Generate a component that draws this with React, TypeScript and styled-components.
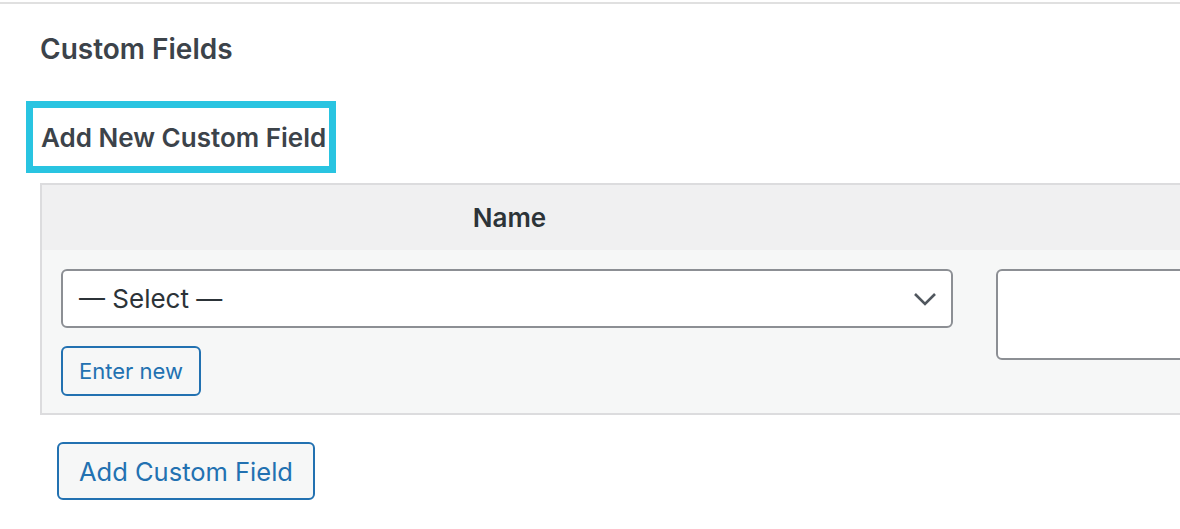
import React from 'react';
import styled, { createGlobalStyle } from 'styled-components';

const GlobalStyle = createGlobalStyle`
  html, body {
    margin: 0;
    padding: 0;
    background: #fff;
    overflow: hidden;
  }
  body {
    font-family: Inter, "Noto Sans", "Liberation Sans", sans-serif;
    color: #3c434a;
  }
`;

const Panel = styled.div`
  margin-top: 2px;
  border-top: 2px solid #e0e0e0;
  width: 100%;
`;

const Title = styled.h2`
  margin: 0;
  padding: 27px 0 0 40px;
  font-size: 28px;
  font-weight: 600;
  line-height: 36px;
  color: #3c434a;
`;

const Highlight = styled.div`
  margin: 34px 0 0 26px;
  width: 288px;
  height: 58px;
  border: 7px solid #29c4e1;
  display: flex;
  align-items: center;
  padding-left: 8px;
  box-sizing: content-box;
  font-size: 26px;
  font-weight: 600;
  color: #3c434a;
  white-space: nowrap;
`;

const Table = styled.div`
  margin: 10px 0 0 40px;
  width: 1800px;
  border: 2px solid #dcdcde;
  display: grid;
  grid-template-columns: 935px 1fr;
`;

const HeadCell = styled.div`
  background: #f0f0f1;
  height: 65px;
  display: flex;
  align-items: center;
  justify-content: center;
  font-size: 26px;
  font-weight: 600;
  color: #2c3338;
`;

const BodyCell = styled.div`
  background: #f6f7f7;
  padding: 19px 19px 17px;
  display: flex;
  flex-direction: column;
  align-items: flex-start;
  gap: 18px;
`;

const SelectBox = styled.div`
  box-sizing: border-box;
  width: 892px;
  height: 59px;
  border: 2px solid #8c8f94;
  border-radius: 6px;
  background: #fff;
  display: flex;
  align-items: center;
  justify-content: space-between;
  padding: 0 14px 0 16px;
  font-size: 26px;
  color: #2c3338;
`;

const TextArea = styled.div`
  box-sizing: border-box;
  width: 700px;
  height: 91px;
  border: 2px solid #8c8f94;
  border-radius: 6px;
  background: #fff;
`;

const Button = styled.button<{ $big?: boolean }>`
  box-sizing: border-box;
  height: ${p => (p.$big ? 58 : 50)}px;
  padding: 0 ${p => (p.$big ? 20 : 16)}px;
  border: 2px solid #2271b1;
  border-radius: 6px;
  background: #f6f7f7;
  color: #2271b1;
  font-family: inherit;
  font-size: ${p => (p.$big ? 25.5 : 22)}px;
  white-space: nowrap;
  cursor: pointer;
`;

const Footer = styled.div`
  padding: 27px 0 0 57px;
`;

const Chevron = () => (
  <svg width="24" height="14" viewBox="0 0 24 14" fill="none">
    <path d="M2 2l10 10L22 2" stroke="#50575e" strokeWidth="2.6" />
  </svg>
);

export default function App() {
  return (
    <>
      <GlobalStyle />
      <Panel>
        <Title>Custom Fields</Title>
        <Highlight>Add New Custom Field</Highlight>
        <Table>
          <HeadCell>Name</HeadCell>
          <HeadCell />
          <BodyCell>
            <SelectBox>
              <span>— Select —</span>
              <Chevron />
            </SelectBox>
            <Button>Enter new</Button>
          </BodyCell>
          <BodyCell>
            <TextArea />
          </BodyCell>
        </Table>
        <Footer>
          <Button $big>Add Custom Field</Button>
        </Footer>
      </Panel>
    </>
  );
}
